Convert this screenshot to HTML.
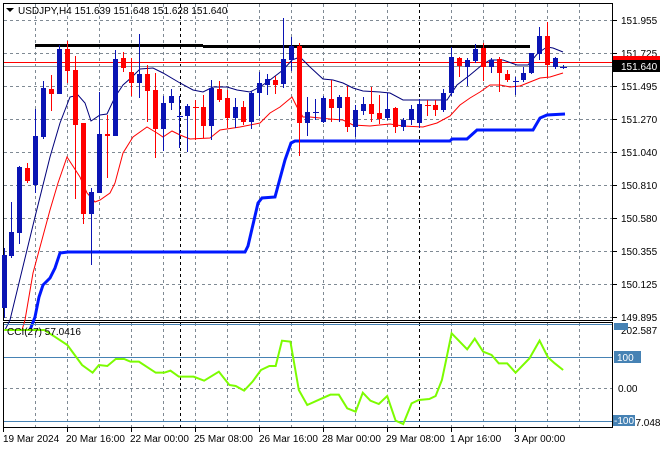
<!DOCTYPE html>
<html><head><meta charset="utf-8"><style>
html,body{margin:0;padding:0;background:#fff;}
svg{display:block;font-family:"Liberation Sans",sans-serif;font-size:10px;}
</style></head><body>
<svg width="660" height="450" viewBox="0 0 660 450" xmlns="http://www.w3.org/2000/svg">
<rect width="660" height="450" fill="#fff"/>
<!-- grid -->
<g stroke="#7f8a94" stroke-width="1" stroke-dasharray="3,3" fill="none">
<path d="M4 20.5H612M4 53.5H612M4 86.5H612M4 119.5H612M4 152.5H612M4 185.5H612M4 218.5H612M4 251.5H612M4 284.5H612M4 317.5H612"/>
<path d="M35.5 4V320M67.5 4V320M99.5 4V320M131.5 4V320M163.5 4V320M195.5 4V320M227.5 4V320M259.5 4V320M291.5 4V320M323.5 4V320M355.5 4V320M387.5 4V320M451.5 4V320M483.5 4V320M515.5 4V320M547.5 4V320M579.5 4V320"/>
<path d="M35.5 323V427M67.5 323V427M99.5 323V427M131.5 323V427M163.5 323V427M195.5 323V427M227.5 323V427M259.5 323V427M291.5 323V427M323.5 323V427M355.5 323V427M387.5 323V427M451.5 323V427M483.5 323V427M515.5 323V427M547.5 323V427M579.5 323V427M4 388.5H612"/>
</g>
<g stroke="#000" stroke-dasharray="3,3"><path d="M180.5 4V320M419.5 4V320M180.5 323V427M419.5 323V427"/></g>
<!-- frames -->
<g stroke="#000" fill="none"><rect x="3.5" y="3.5" width="609" height="317"/><rect x="3.5" y="322.5" width="609" height="105"/></g>
<!-- horizontal price lines -->
<path d="M4 66.5H612" stroke="#8c97a0"/>
<path d="M4 62.5H612" stroke="#f00"/>
<path d="M35 45.5H203M203 46.5H530" stroke="#000" stroke-width="3"/>
<!-- step line -->
<polyline fill="none" stroke="#0018ff" stroke-width="3" points="30,330 35,317 39,297 43,285 50,278 55,268 60,253 68,252 245,252 248,246 258,203 262,198 275,197 285,160 291,143 295,141 450,141 452,139 467,139 477,130 533,130 540,118 547,115 565,114"/>
<!-- MAs -->
<polyline fill="none" stroke="#00007a" stroke-width="1" points="5,330 10,320 35,217 50,157 60,123 70,97 78,95 85,103 91,121 100,115 107,114 115,97 123,85 132,77 140,69 153,68 163,73 180,83 193,90 203,92 213,87 227,87 237,90 250,92 260,87 270,80 283,70 292,60 300,57 310,67 323,79 333,80 343,83 353,88 363,91 380,92 390,93 403,100 417,100 447,100 457,85 470,75 482,65 490,60 503,60 517,65 528,65 538,53 547,47 553,48 563,52"/>
<polyline fill="none" stroke="#f00" stroke-width="1" points="22,330 25,320 33,273 50,210 58,183 67,157 80,177 87,193 95,202 100,200 110,193 115,183 123,153 133,137 147,127 157,133 163,137 172,131 180,135 190,139 210,138 220,130 240,127 260,123 270,113 280,107 292,97 297,107 303,117 310,117 320,118 330,119 343,120 353,125 370,126 390,124 403,126 423,127 437,123 450,116 460,105 470,98 480,92 490,85 500,85 510,87 520,86 530,82 540,78 550,77 563,73"/>
<!-- candles blue -->
<path stroke="#0a14b4" fill="none" d="M4.5 248V318M11.5 202V258M19.5 166V244M35.5 109V193M43.5 81V139M59.5 45V94M91.5 188V265M99.5 92V193M115.5 50V136M139.5 34V98M163.5 96V151M171.5 89V110M179.5 96V148M187.5 104V152M211.5 80V140M235.5 98V128M251.5 91V129M259.5 72V116M267.5 74V95M283.5 18V88M291.5 37V71M307.5 97V136M315.5 99V120M323.5 96V123M339.5 95V122M355.5 105V137M363.5 97V115M387.5 93V120M403.5 118V131M411.5 105V125M419.5 99V128M443.5 89V112M451.5 47V96M467.5 58V86M475.5 44V63M491.5 58V73M515.5 77V95M523.5 67V82M531.5 53V74M539.5 27V60M555.5 57V69M563.5 65V69M177 116.5H183M313 112.5H319M513 81.5H519M560 67.5H567"/>
<path fill="#0a14b4" d="M2 255h5v53h-5zM9 232h5v24h-5zM17 167h5v66h-5zM33 136h5v49h-5zM41 88h5v49h-5zM57 49h5v45h-5zM89 192h5v22h-5zM97 134h5v59h-5zM113 59h5v77h-5zM137 74h5v9h-5zM161 103h5v26h-5zM169 96h5v7h-5zM185 106h5v10h-5zM209 88h5v38h-5zM233 107h5v11h-5zM249 93h5v29h-5zM257 83h5v10h-5zM265 79h5v6h-5zM281 59h5v25h-5zM289 46h5v14h-5zM305 112h5v11h-5zM321 98h5v24h-5zM337 97h5v11h-5zM353 110h5v17h-5zM361 104h5v7h-5zM385 109h5v9h-5zM401 120h5v7h-5zM409 109h5v11h-5zM417 104h5v19h-5zM441 93h5v17h-5zM449 57h5v36h-5zM465 60h5v7h-5zM473 49h5v12h-5zM489 60h5v7h-5zM521 73h5v7h-5zM529 53h5v20h-5zM537 36h5v18h-5zM553 58h5v9h-5z"/>
<!-- candles red -->
<path stroke="#f00" fill="none" d="M27.5 163V183M51.5 75V111M67.5 41V83M75.5 56V199M83.5 123V224M107.5 115V178M123.5 52V72M131.5 58V96M147.5 65V122M155.5 73V158M195.5 100V140M203.5 95V138M219.5 81V102M227.5 90V128M243.5 101V125M275.5 76V94M299.5 43V156M331.5 80V122M347.5 86V132M371.5 87V122M379.5 95V124M395.5 107V133M427.5 100V116M435.5 100V116M459.5 57V77M483.5 43V81M499.5 57V92M507.5 70V82M547.5 22V77M193 107.5H199M425 105.5H431"/>
<path fill="#f00" d="M25 168h5v13h-5zM49 89h5v5h-5zM65 49h5v22h-5zM73 70h5v55h-5zM81 123h5v91h-5zM105 134h5v2h-5zM121 58h5v10h-5zM129 72h5v11h-5zM145 74h5v17h-5zM153 90h5v39h-5zM201 107h5v19h-5zM217 89h5v11h-5zM225 98h5v20h-5zM241 107h5v15h-5zM273 80h5v5h-5zM297 46h5v77h-5zM329 99h5v9h-5zM345 97h5v30h-5zM369 104h5v10h-5zM377 113h5v6h-5zM393 108h5v19h-5zM433 105h5v5h-5zM457 58h5v8h-5zM481 48h5v19h-5zM497 59h5v14h-5zM505 74h5v6h-5zM545 36h5v29h-5z"/>
<!-- header -->
<path d="M6 8h8l-4 4z" fill="#000"/>
<text x="18" y="14" fill="#000">USDJPY,H4  151.639 151.648 151.628 151.640</text>
<!-- right axis -->
<g fill="#000">
<path d="M613 20.5h4M613 53.5h4M613 86.5h4M613 119.5h4M613 152.5h4M613 185.5h4M613 218.5h4M613 251.5h4M613 284.5h4M613 317.5h4" stroke="#000"/>
<text x="621" y="24">151.955</text>
<text x="621" y="57">151.725</text>
<text x="621" y="90">151.495</text>
<text x="621" y="123">151.270</text>
<text x="621" y="156">151.040</text>
<text x="621" y="189">150.810</text>
<text x="621" y="222">150.580</text>
<text x="621" y="255">150.355</text>
<text x="621" y="288">150.125</text>
<text x="621" y="321">149.895</text>
</g>
<rect x="613" y="56" width="47" height="9" fill="#f00"/>
<rect x="613" y="60" width="47" height="12" fill="#000"/>
<text x="621" y="70" fill="#fff">151.640</text>
<!-- CCI -->
<g stroke="#4682b4"><path d="M4 324.5H612M4 357.5H612M4 421.5H612"/></g>
<g transform="translate(0,300) scale(0.42088,0.33333)">
<polyline fill="none" stroke="#7cfc00" stroke-width="2" vector-effect="non-scaling-stroke" points="10,90 105,90 130,110 160,135 195,195 220,218 235,195 255,198 275,177 295,177 310,185 330,185 370,218 390,218 405,212 425,230 460,230 485,242 520,215 545,255 560,258 580,272 600,245 620,210 640,198 655,198 670,122 690,125 710,270 730,315 760,298 785,284 805,284 825,325 845,335 862,278 880,302 900,312 920,288 940,362 958,372 978,310 995,300 1020,297 1035,288 1050,240 1060,180 1073,100 1110,148 1128,116 1148,155 1168,165 1185,190 1205,190 1225,218 1258,175 1282,122 1302,172 1318,190 1338,210"/>
</g>
<text x="7" y="335" fill="#000">CCI(27) 57.0416</text>
<text x="621" y="334" fill="#000">202.587</text>
<rect x="614" y="323" width="14" height="7" fill="#4682b4"/>
<rect x="614" y="351" width="27" height="12" fill="#4682b4"/>
<text x="617" y="361" fill="#fff">100</text>
<text x="618" y="392" fill="#000">0.00</text>
<text x="621" y="426" fill="#000">-127.0488</text>
<rect x="613" y="415" width="22" height="11" fill="#4682b4"/>
<text x="614" y="424" fill="#fff">-100</text>
<!-- time axis -->
<g stroke="#000"><path d="M3.5 428v4M67.5 428v4M131.5 428v4M195.5 428v4M259.5 428v4M323.5 428v4M387.5 428v4M451.5 428v4M515.5 428v4"/></g>
<g fill="#000">
<text x="3" y="442">19 Mar 2024</text>
<text x="66" y="442">20 Mar 16:00</text>
<text x="130" y="442">22 Mar 00:00</text>
<text x="194" y="442">25 Mar 08:00</text>
<text x="259" y="442">26 Mar 16:00</text>
<text x="322" y="442">28 Mar 00:00</text>
<text x="386" y="442">29 Mar 08:00</text>
<text x="450" y="442">1 Apr 16:00</text>
<text x="514" y="442">3 Apr 00:00</text>
</g>
</svg>
</body></html>
